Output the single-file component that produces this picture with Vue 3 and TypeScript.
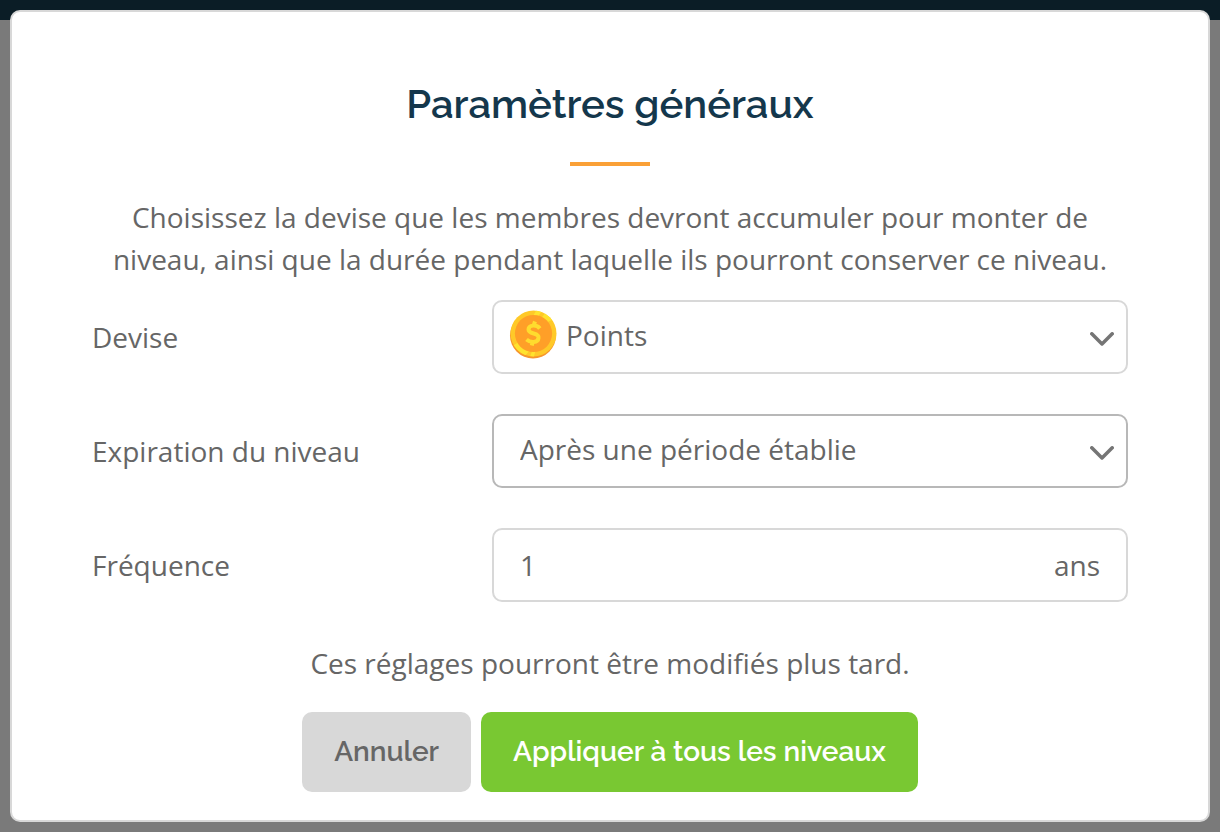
<script setup lang="ts">
import { ref } from 'vue'

const currency = ref('points')
const expiration = ref('period')
const frequency = ref('1')
</script>

<template>
  <div class="page">
    <div class="topbar"></div>
    <main class="modal" role="dialog" aria-labelledby="settings-title">
      <h1 id="settings-title" class="title">Paramètres généraux</h1>
      <div class="rule"></div>
      <p class="intro">
        Choisissez la devise que les membres devront accumuler pour monter de niveau, ainsi que la
        durée pendant laquelle ils pourront conserver ce niveau.
      </p>

      <form class="form" @submit.prevent>
        <div class="row">
          <label class="label" for="currency">Devise</label>
          <div class="field">
            <svg class="coin" viewBox="0 0 48 50" aria-hidden="true">
              <defs>
                <clipPath id="coin-face"><circle cx="24.5" cy="23.5" r="23" /></clipPath>
              </defs>
              <circle cx="24" cy="25.5" r="23" fill="#f7962c" />
              <circle cx="24.5" cy="23.5" r="23" fill="#ffc928" />
              <g clip-path="url(#coin-face)" fill="#ffe32e">
                <path d="M28 -1L33 1L28 8H23ZM37 2L45 9L34 14L31 10ZM3 36L12 31L21 40L14 48ZM20 49L24 39L27 39L24 50Z" />
              </g>
              <circle cx="24.5" cy="23.5" r="18.6" fill="#ff9f28" />
              <path
                d="M30.8 18.5C28 14.5 19.5 14.5 19.5 19.5C19.5 25 30.5 22 29.5 28C29 33 21.5 33 17.5 29.5M26 11.5L24.5 16M23.8 31L22.8 35.5"
                fill="none"
                stroke="#ffdc2e"
                stroke-width="4"
              />
            </svg>
            <select id="currency" v-model="currency" class="control with-icon">
              <option value="points">Points</option>
            </select>
            <svg class="chevron" viewBox="0 0 24 14" aria-hidden="true">
              <path d="M1.8 1.8L12 12L22.2 1.8" />
            </svg>
          </div>
        </div>

        <div class="row">
          <label class="label" for="expiration">Expiration du niveau</label>
          <div class="field">
            <select id="expiration" v-model="expiration" class="control active">
              <option value="period">Après une période établie</option>
            </select>
            <svg class="chevron" viewBox="0 0 24 14" aria-hidden="true">
              <path d="M1.8 1.8L12 12L22.2 1.8" />
            </svg>
          </div>
        </div>

        <div class="row">
          <label class="label" for="frequency">Fréquence</label>
          <div class="field">
            <input id="frequency" v-model="frequency" class="control" type="text" inputmode="numeric" />
            <span class="unit">ans</span>
          </div>
        </div>

        <div class="footer">
          <p class="note">Ces réglages pourront être modifiés plus tard.</p>
          <div class="actions">
            <button class="button cancel" type="button">Annuler</button>
            <button class="button apply" type="submit">Appliquer à tous les niveaux</button>
          </div>
        </div>
      </form>
    </main>
  </div>
</template>

<style>
body {
  margin: 0;
  background: #7a7a7a;
}
</style>

<style scoped>
.page {
  position: relative;
  box-sizing: border-box;
  min-height: 100vh;
  padding: 10px;
  font-family: 'Open Sans', 'Noto Sans', sans-serif;
  font-size: 28px;
  line-height: 42px;
  color: #666;
}
.topbar {
  position: absolute;
  top: 0;
  left: 0;
  right: 0;
  height: 20px;
  background: #0b1d26;
}
.modal {
  position: relative;
  padding: 68px 80px 28px;
  border: 2px solid #d8d8d8;
  border-radius: 10px;
  background: #fff;
}
.title {
  margin: 0;
  font-family: Raleway, Lato, sans-serif;
  font-size: 40px;
  line-height: 48px;
  font-weight: 600;
  text-align: center;
  color: #14374c;
}
.rule {
  width: 80px;
  height: 4px;
  margin: 34px auto 30px;
  background: #faa036;
}
.intro {
  margin: 0 0 20px;
  text-align: center;
}
.form {
  display: flex;
  flex-direction: column;
  gap: 40px;
}
.row {
  display: grid;
  grid-template-columns: 400px 1fr;
  align-items: center;
}
.field {
  position: relative;
}
.control {
  display: block;
  box-sizing: border-box;
  width: 100%;
  height: 74px;
  margin: 0;
  padding: 0 26px;
  border: 2px solid #d8d8d8;
  border-radius: 10px;
  outline: none;
  appearance: none;
  background: #fff;
  color: #666;
  font: inherit;
}
select.control {
  padding-bottom: 4px;
}
.control.with-icon {
  padding-left: 72px;
}
.control.active {
  border-color: #b8b8b8;
}
.coin {
  position: absolute;
  top: 10px;
  left: 17px;
  width: 48px;
  height: 50px;
}
.chevron {
  position: absolute;
  top: 32px;
  right: 14px;
  width: 24px;
  height: 14px;
  fill: none;
  stroke: #757575;
  stroke-width: 3.5;
  stroke-linecap: round;
  stroke-linejoin: round;
  pointer-events: none;
}
.unit {
  position: absolute;
  top: 16px;
  right: 28px;
}
.footer {
  display: flex;
  flex-direction: column;
  gap: 28px;
}
.note {
  margin: 0;
  text-align: center;
}
.actions {
  display: flex;
  justify-content: center;
  gap: 10px;
}
.button {
  height: 80px;
  padding: 0 32px;
  border: 0;
  border-radius: 10px;
  font-family: Raleway, Lato, sans-serif;
  font-size: 28px;
  line-height: 42px;
  font-weight: 600;
}
.cancel {
  background: #d8d8d8;
  color: #666;
}
.apply {
  background: #79c832;
  color: #fff;
}
</style>
